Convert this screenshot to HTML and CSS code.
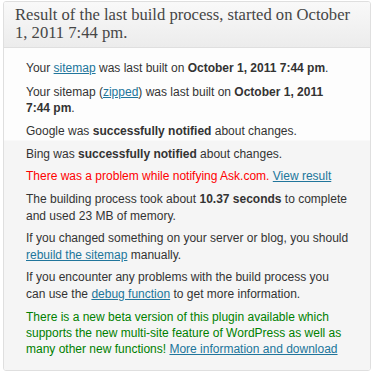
FILE: index.html
```html
<!DOCTYPE html>
<html>
<head>
<meta charset="utf-8">
<link rel="stylesheet" href="styles.css">
</head>
<body>
<div class="postbox">
  <h3 class="hndle">Result of the last build process, started on October 1, 2011 7:44 pm.</h3>
  <div class="inside">
    <ul class="status">
      <li>Your <a href="#">sitemap</a> was last built on <b>October 1, 2011 7:44 pm</b>.</li>
      <li>Your sitemap (<a href="#">zipped</a>) was last built on <b>October 1, 2011 7:44 pm</b>.</li>
      <li>Google was <b>successfully notified</b> about changes.</li>
      <li>Bing was <b>successfully notified</b> about changes.</li>
      <li class="error">There was a problem while notifying Ask.com. <a href="#">View result</a></li>
      <li>The building process took about <b>10.37 seconds</b> to complete and used 23 MB of memory.</li>
      <li>If you changed something on your server or blog, you should <a href="#">rebuild the sitemap</a> manually.</li>
      <li>If you encounter any problems with the build process you can use the <a href="#">debug function</a> to get more information.</li>
      <li class="notice">There is a new beta version of this plugin available which supports the new multi-site feature of WordPress as well as many other new functions! <a href="#">More information and download</a></li>
    </ul>
  </div>
</div>
</body>
</html>
```
FILE: styles.css
```css
html, body {
  margin: 0;
  padding: 0;
  background: #fff;
}
body {
  padding: 1px 3px 0 3px;
}
.postbox {
  width: 368px;
  border: 1px solid #dfdfdf;
  border-radius: 3px;
  overflow: hidden;
  box-sizing: border-box;
}
.hndle {
  margin: 0;
  padding: 4px 10px 5px 11px;
  font-family: "Liberation Serif", "Times New Roman", serif;
  font-weight: normal;
  font-size: 16.6px;
  line-height: 18px;
  color: #464646;
  background: linear-gradient(#f9f9f9, #ececec);
  border-bottom: 1px solid #dfdfdf;
}
.inside {
  background: linear-gradient(#fdfdfd 0, #fdfdfd 92px, #f5f5f5 93px);
  padding: 12px 20px 13px 22px;
}
.status {
  list-style: none;
  margin: 0;
  padding: 0;
  font-family: "Liberation Sans", Arial, sans-serif;
  font-size: 12px;
  line-height: 16.3px;
  color: #333;
}
.status li {
  margin: 0 0 6.5px 0;
}
.status li:first-child {
  margin-bottom: 7.5px;
}
.status li:last-child {
  margin-bottom: 0;
}
.status a {
  color: #21759b;
  text-decoration: underline;
}
.status b {
  font-weight: bold;
}
.error {
  color: #f00;
}
.notice {
  color: #008000;
}
```
